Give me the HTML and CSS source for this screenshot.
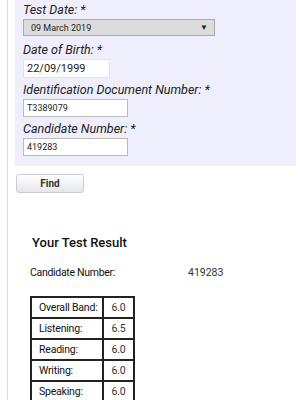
FILE: index.html
```html
<!DOCTYPE html>
<html>
<head>
  <title>Test Result</title>
  <link rel="stylesheet" href="styles.css">
</head>
<body>
  <div class="page">
    <form class="search">
      <label class="field-label">Test Date: *</label>
      <div class="select">
        <span>09 March 2019</span>
        <span class="arrow">&#9660;</span>
      </div>

      <label class="field-label">Date of Birth: *</label>
      <input class="field dob" type="text" value="22/09/1999">

      <label class="field-label">Identification Document Number: *</label>
      <input class="field small" type="text" value="T3389079">

      <label class="field-label">Candidate Number: *</label>
      <input class="field small" type="text" value="419283">
    </form>

    <button class="find" type="button">Find</button>

    <div class="result">
      <h3>Your Test Result</h3>
      <div class="cand-row">
        <span class="cand-label">Candidate Number:</span>
        <span class="cand-value">419283</span>
      </div>
      <table class="scores">
        <tr><td>Overall Band:</td><td class="num">6.0</td></tr>
        <tr><td>Listening:</td><td class="num">6.5</td></tr>
        <tr><td>Reading:</td><td class="num">6.0</td></tr>
        <tr><td>Writing:</td><td class="num">6.0</td></tr>
        <tr><td>Speaking:</td><td class="num">6.0</td></tr>
      </table>
    </div>
  </div>
</body>
</html>
```

FILE: styles.css
```css
body {
  margin: 0;
  padding: 0;
  background-color: #FFF;
  font-family: Roboto, "Liberation Sans", sans-serif;
  color: #222;
}

.page {
  margin-left: 7px;
  border-left: 1px solid #DDD;
  min-height: 400px;
}

.search {
  margin-left: 7px;
  width: 273px;
  padding: 0 0 8px 8px;
  background-color: #EEEEFC;
}

.field-label {
  display: block;
  font-size: 12.5px;
  font-style: italic;
  line-height: 19px;
  color: #222;
}

.select {
  display: flex;
  justify-content: space-between;
  align-items: center;
  box-sizing: border-box;
  width: 192px;
  height: 17px;
  padding: 0 6px 0 7px;
  margin-bottom: 4px;
  background-color: #DCDCDC;
  border: 1px solid #AAA;
  font-size: 9px;
  color: #222;
}

.select .arrow {
  font-size: 8px;
}

.field {
  display: block;
  box-sizing: border-box;
  height: 18px;
  padding: 0 3px;
  margin: 0 0 2px 0;
  border: 1px solid #BBB;
  background-color: #FFF;
  font-family: Roboto, "Liberation Sans", sans-serif;
  color: #222;
}

.dob {
  width: 87px;
  height: 19px;
  font-size: 11px;
  border-color: #E2E2E2;
}

.small {
  width: 105px;
  font-size: 9px;
}

.find {
  display: block;
  width: 68px;
  height: 19px;
  margin: 8px 0 0 8px;
  border: 1px solid #CCC;
  border-radius: 3px;
  background: linear-gradient(#FFF, #E4E6EA);
  font-family: Roboto, "Liberation Sans", sans-serif;
  font-size: 10px;
  font-weight: bold;
  color: #333;
}

.result {
  padding-left: 22px;
}

.result h3 {
  margin: 42px 0 0 2px;
  font-size: 13px;
  font-weight: 500;
  color: #111;
}

.cand-row {
  display: flex;
  margin-top: 16px;
  font-size: 10.5px;
  letter-spacing: -0.3px;
  color: #111;
}

.cand-value {
  letter-spacing: 0;
  color: #333;
}

.cand-label {
  width: 158px;
}

.scores {
  margin-top: 17px;
  border-collapse: collapse;
  font-size: 10.5px;
  letter-spacing: -0.2px;
  color: #111;
}

.scores td {
  border: 2px solid #222;
  height: 19px;
  padding: 0 0 0 7px;
  width: 63px;
}

.scores td.num {
  width: 29px;
  padding: 0;
  text-align: center;
  color: #333;
}
```
